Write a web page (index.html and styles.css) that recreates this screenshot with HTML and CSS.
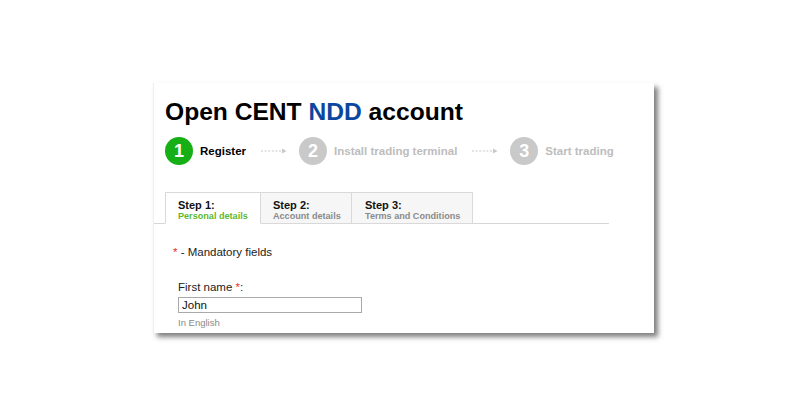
FILE: index.html
```html
<!DOCTYPE html>
<html lang="en">
<head>
  <meta charset="UTF-8" />
  <title>Open CENT NDD account</title>
  <link rel="stylesheet" href="styles.css">
</head>
<body>
  <div class="card">
    <h1>Open CENT <span class="accent">NDD</span> account</h1>

    <div class="steps">
      <div class="step active">
        <span class="num">1</span>
        <span class="label">Register</span>
      </div>
      <svg class="arrow" width="26" height="8" viewBox="0 0 26 8">
        <path d="M0 4H21" stroke="#c8c8c8" stroke-width="1.2" stroke-dasharray="2 1.6"/>
        <path d="M21 1.5L25.5 4L21 6.5Z" fill="#c8c8c8"/>
      </svg>
      <div class="step">
        <span class="num">2</span>
        <span class="label">Install trading terminal</span>
      </div>
      <svg class="arrow" width="26" height="8" viewBox="0 0 26 8">
        <path d="M0 4H21" stroke="#c8c8c8" stroke-width="1.2" stroke-dasharray="2 1.6"/>
        <path d="M21 1.5L25.5 4L21 6.5Z" fill="#c8c8c8"/>
      </svg>
      <div class="step">
        <span class="num">3</span>
        <span class="label">Start trading</span>
      </div>
    </div>

    <div class="tabs">
      <div class="tab current tab-1">
        <div class="tab-title">Step 1:</div>
        <div class="tab-sub">Personal details</div>
      </div>
      <div class="tab tab-2">
        <div class="tab-title">Step 2:</div>
        <div class="tab-sub">Account details</div>
      </div>
      <div class="tab tab-3">
        <div class="tab-title">Step 3:</div>
        <div class="tab-sub">Terms and Conditions</div>
      </div>
    </div>

    <p class="mandatory"><span class="req">*</span> - Mandatory fields</p>

    <div class="field">
      <label for="firstName">First name <span class="req">*</span>:</label>
      <input type="text" id="firstName" value="John">
      <div class="hint">In English</div>
    </div>
  </div>
</body>
</html>
```

FILE: styles.css
```css
* {
  box-sizing: border-box;
  margin: 0;
  padding: 0;
}

body {
  background: #fff;
  font-family: 'Liberation Sans', Arial, sans-serif;
  color: #111;
  min-height: 100vh;
  padding: 83px 0 40px 153px;
}

.card {
  width: 501px;
  height: 250px;
  padding-top: 14px;
  background: #fff;
  border-left: 1px solid #eee;
  box-shadow: 4px 4px 5px rgba(0, 0, 0, 0.5);
  overflow: hidden;
}

h1 {
  font-size: 24.6px;
  line-height: 30px;
  font-weight: bold;
  color: #000;
  padding-left: 11px;
}

.accent {
  color: #0b46a0;
}

.steps {
  display: flex;
  align-items: center;
  margin-top: 10px;
  padding-left: 11px;
}

.step {
  display: flex;
  align-items: center;
  gap: 7px;
}

.num {
  width: 28px;
  height: 28px;
  border-radius: 50%;
  background: #c9c9c9;
  color: #fff;
  font-size: 18px;
  font-weight: bold;
  display: flex;
  justify-content: center;
  align-items: center;
}

.label {
  font-size: 11.5px;
  font-weight: bold;
  color: #bdbdbd;
}

.step.active .num {
  background: #16b016;
}

.step.active .label {
  color: #000;
}

.arrow {
  margin: 0 12px 0 15px;
}

.tabs {
  display: flex;
  margin-top: 27px;
  width: 455px;
  padding-left: 11px;
  border-bottom: 1px solid #d6d6d6;
}

.tab {
  height: 32px;
  margin-bottom: -1px;
  padding: 6px 0 0 12px;
  background: #f6f6f6;
  border: 1px solid #d9d9d9;
  border-left: none;
}

.tab-1 { width: 96px; border-left: 1px solid #d9d9d9; }
.tab-2 { width: 91px; }
.tab-3 { width: 121px; padding-left: 13px; }

.tab.current {
  background: #fff;
  border-bottom-color: #fff;
}

.tab-title {
  font-size: 11px;
  font-weight: bold;
  color: #111;
  line-height: 12px;
}

.tab-sub {
  font-size: 9.1px;
  font-weight: bold;
  color: #8a8a8a;
  line-height: 11px;
}

.tab.current .tab-sub {
  color: #5cb82c;
}

.mandatory {
  margin: 21px 0 0 19px;
  font-size: 11.5px;
  line-height: 14px;
  color: #222;
}

.req {
  color: #e53030;
}

.field {
  margin: 21px 0 0 24px;
}

.field label {
  display: block;
  font-size: 11.5px;
  line-height: 14px;
  color: #222;
}

.field input {
  display: block;
  margin-top: 3px;
  width: 184px;
  height: 16px;
  padding: 0 3px;
  border: 1px solid #a9a9a9;
  font-family: 'Liberation Sans', Arial, sans-serif;
  font-size: 11.5px;
  color: #111;
}

.hint {
  margin-top: 4px;
  font-size: 9.5px;
  line-height: 12px;
  color: #8a8a8a;
}
```
